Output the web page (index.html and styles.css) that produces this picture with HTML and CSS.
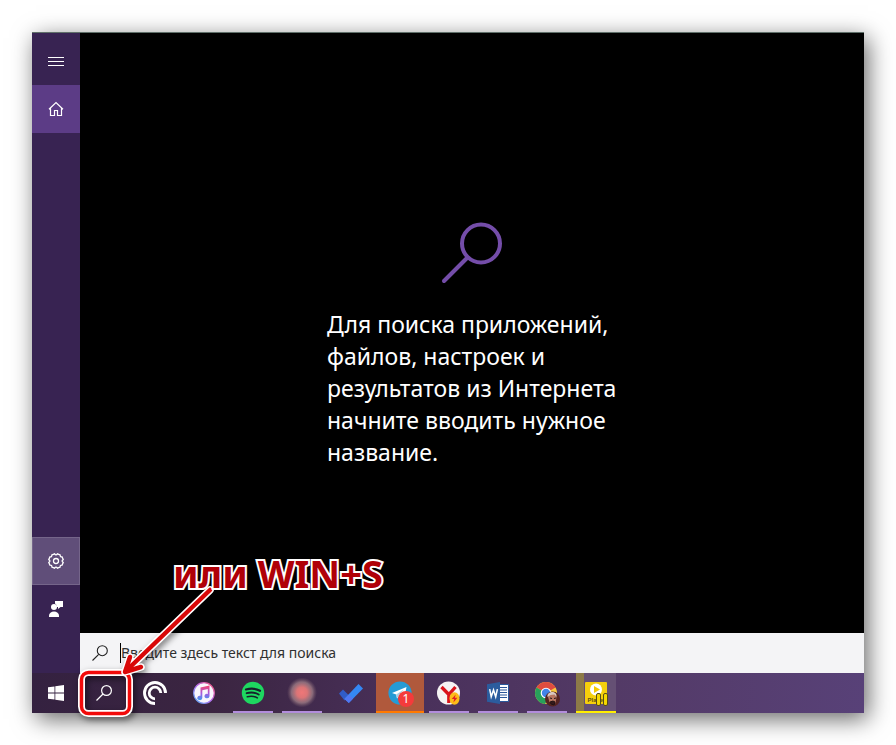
FILE: index.html
```html
<!DOCTYPE html>
<html lang="ru">
<head>
<meta charset="utf-8">
<meta name="viewport" content="width=device-width, initial-scale=1">
<title>Поиск</title>
<link rel="stylesheet" href="styles.css">
</head>
<body>
<main class="desktop">
  <div class="panel">
    <nav class="sidebar" aria-label="Меню">
      <button class="side-btn menu" aria-label="Меню">
        <svg width="16" height="16" viewBox="0 0 16 16"><path d="M0 4.5h16M0 8.5h16M0 12.5h16" stroke="#fff"/></svg>
      </button>
      <button class="side-btn home" aria-label="Главная">
        <svg width="16" height="16" viewBox="0 0 16 16" fill="none" stroke="#fff" stroke-width="1.2"><path d="M1 8.2 8 1.5l7 6.7M2.500 7v7.500h4V9.500h3v5h4V7"/></svg>
      </button>
      <button class="side-btn settings" aria-label="Параметры">
        <svg width="16" height="16" viewBox="-8 -8 16 16" fill="none" stroke="#fff" stroke-width="1.3"><path d="M7.200 1.400 6.100 4.100Q4 4 4.100 6.100L1.400 7.200Q0 5-1.400 7.200L-4.100 6.100Q-4 4-6.100 4.100L-7.200 1.400Q-5 0-7.200-1.400L-6.100-4.100Q-4-4-4.100-6.100L-1.400-7.200Q0-5 1.400-7.200L4.100-6.100Q4-4 6.100-4.100L7.200-1.400Q5 0 7.200 1.400Z"/><circle r="2.500"/></svg>
      </button>
      <button class="side-btn feedback" aria-label="Отзыв">
        <svg width="16" height="16" viewBox="0 0 16 16" fill="#fff"><path d="M7 0h8v6h-2.500L10 8V6H8.500A3 3 0 0 0 7 2.500z"/><circle cx="6" cy="6" r="3"/><path d="M1 16v-1.500a5 4 0 0 1 10 0V16z"/></svg>
      </button>
    </nav>
    <div class="content">
      <section class="hint">
        <svg class="hint-icon" width="62" height="62" viewBox="0 0 62 62" fill="none" stroke="#744da9" stroke-width="4" stroke-linecap="round"><circle cx="40" cy="21.500" r="19"/><path d="M26.500 35.500 3 59"/></svg>
        <p class="hint-text">Для поиска приложений, файлов, настроек и результатов из Интернета начните вводить нужное название.</p>
      </section>
      <label class="search">
        <svg width="16" height="16" viewBox="0 0 16 16" fill="none" stroke="#222" stroke-width="1.100"><circle cx="10.300" cy="5.700" r="5"/><path d="M6.700 9.300.5 15.500"/></svg>
        <input class="search-input" type="text" placeholder="Введите здесь текст для поиска" aria-label="Поиск">
      </label>
    </div>
  </div>
  <footer class="taskbar">
    <button class="task" aria-label="Пуск">
      <svg width="16" height="16" viewBox="0 0 16 16" fill="#fff"><path d="M0 2.300 6.500 1.400v6.100H0zM7.300 1.300 16 0v7.500H7.300zM0 8.400h6.500v6.200L0 13.700zM7.300 8.400H16V16l-8.700-1.300z"/></svg>
    </button>
    <button class="task" aria-label="Поиск">
      <svg width="16" height="16" viewBox="0 0 16 16" fill="none" stroke="#fff" stroke-width="1.200"><circle cx="10.500" cy="5.500" r="4.900"/><path d="M7 9 .5 15.500"/></svg>
    </button>
    <div class="apps">
      <button class="task" aria-label="Pocket Casts">
        <svg width="24" height="24" viewBox="0 0 24 24" fill="none" stroke="#fff"><path d="M12 22.500A10.500 10.500 0 1 1 22.500 12" stroke-width="2.900"/><path d="M12 17.800A5.800 5.800 0 1 1 17.800 12" stroke-width="2.800"/></svg>
      </button>
      <button class="task" aria-label="iTunes">
        <svg width="24" height="24" viewBox="0 0 24 24"><defs><linearGradient id="ring" x1="0" y1="1" x2="1" y2="0"><stop offset="0" stop-color="#53b4f5"/><stop offset=".5" stop-color="#b66df0"/><stop offset="1" stop-color="#f95472"/></linearGradient><linearGradient id="note" x1="0" y1="0" x2="0" y2="1"><stop offset="0" stop-color="#f5436f"/><stop offset=".55" stop-color="#a45be0"/><stop offset="1" stop-color="#3a9cf0"/></linearGradient></defs><circle cx="12" cy="12" r="10.300" fill="#f8f6fc" stroke="url(#ring)" stroke-width="1.200"/><path d="M8.500 6.500 17.500 4.500v10.700a2.500 2.200 0 1 1-1.700-2.200V8l-5.500 1.200v7.800A2.500 2.200 0 1 1 8.500 14.800z" fill="url(#note)"/></svg>
      </button>
      <button class="task open" aria-label="Spotify">
        <svg width="24" height="24" viewBox="0 0 24 24" fill="none" stroke="#17202b" stroke-linecap="round"><circle cx="12" cy="12" r="11.200" fill="#1ed760" stroke="none"/><path d="M5 8.500c4.500-1.300 10-1 14 1.300" stroke-width="2.200"/><path d="M5.700 12.200c4-1.100 8.500-.7 12 1.300" stroke-width="1.900"/><path d="M6.300 15.700c3.500-.9 7-.6 10 1.200" stroke-width="1.600"/></svg>
      </button>
      <button class="task open" aria-label="Запись">
        <svg width="32" height="32" viewBox="0 0 32 32"><defs><radialGradient id="glow"><stop offset="0" stop-color="#ef7778"/><stop offset=".35" stop-color="#dc7476"/><stop offset=".7" stop-color="#a9858c" stop-opacity=".7"/><stop offset="1" stop-color="#806370" stop-opacity="0"/></radialGradient></defs><circle cx="16" cy="15.500" r="15" fill="url(#glow)"/></svg>
      </button>
      <button class="task" aria-label="To Do">
        <svg width="24" height="24" viewBox="0 0 24 24"><path d="m0 12.500 4-4 6 6-4.500 5z" fill="#315cc7"/><path d="M5.500 17.800 19.500 3 24 7.400 9.800 22z" fill="#3488f5"/><path d="M5.500 18 10 13.500 14.200 17.500 9.800 22z" fill="#5177f2"/></svg>
      </button>
      <button class="task alert" aria-label="Telegram, 1 сообщение">
        <svg width="24" height="24" viewBox="0 0 24 24"><circle cx="12" cy="12" r="11.600" fill="#259bd5"/><path d="m4 12 14.500-6-2.500 13-5-3.500-2 2-.8-4z" fill="#fff"/><path d="m8.200 13.500 7.500-5-5.300 6.500-1.400 2.500z" fill="#a9cfe4"/></svg>
        <span class="badge">1</span>
      </button>
      <button class="task open" aria-label="Яндекс.Браузер">
        <svg width="24" height="24" viewBox="0 0 24 24"><circle cx="11.500" cy="12" r="11.500" fill="#f5f3f3"/><path d="m4.500 6 7.300 7.500L18.500 6M11.800 13v9" fill="none" stroke="#d9141c" stroke-width="3.300"/><ellipse cx="17.500" cy="17.500" rx="5" ry="6.200" fill="#fdbd18"/><path d="m18.700 13.500-4 4.600h2.500l-.8 3.400 4-4.700h-2.600z" fill="#e31e25"/></svg>
      </button>
      <button class="task open" aria-label="Word">
        <svg width="24" height="24" viewBox="0 0 24 24"><path d="M13 3.500h9.500v17H13z" fill="#fff" stroke="#2b579a"/><path d="M14 6.500h7M14 9h7m-7 2.500h7M14 14h7m-7 2.500h7" stroke="#2b579a"/><path d="M1 3.300 14 1v22L1 20.700z" fill="#2b5c9e"/><path d="m3.700 8.200 1.500 7.600L7.500 9l2.200 6.800 1.700-7.600" fill="none" stroke="#fff" stroke-width="1.500"/></svg>
      </button>
      <button class="task open" aria-label="Chrome">
        <svg width="28" height="28" viewBox="0 0 28 28"><circle cx="13" cy="14" r="11" fill="#f8ca3f"/><path d="M13 14 3.500 8.500A11 11 0 0 1 22.500 8.500z" fill="#df4c40"/><path d="M13 14 3.500 8.500A11 11 0 0 0 12 25l4.500-8z" fill="#28a05b"/><path d="M13 9h9.800l-.3-.5-1-1.500H7z" fill="#df4c40"/><circle cx="13" cy="14" r="5.300" fill="#fff"/><circle cx="13" cy="14" r="4.200" fill="#4184e8"/><circle cx="19.500" cy="20" r="7.500" fill="#542321"/><path d="M15 18c1-4 7.500-5 8.500 0l-1 6-3 2-3-3z" fill="#b97761"/><path d="M14.500 18c-1-6 10-7 9 0l-2-2.500-4 .5z" fill="#d9c9c0"/><path d="m17 19 2 .5m2 0 2-.5m-6 4 3-1 2 1-1 3-3-1z" stroke="#211315" fill="#35191a"/></svg>
      </button>
      <button class="task player" aria-label="Player">
        <svg width="26" height="26" viewBox="0 0 26 26"><rect x="2" y="2" width="22" height="22" rx="1" fill="#f5cf0c"/><circle cx="13" cy="9.500" r="6" fill="#fff"/><path d="m11 6 6 3.500-6 3.500z" fill="#f5c900"/><text x="4.500" y="22" class="player-name">Player</text><rect x="13.500" y="13.500" width="4" height="12" rx="1.500" fill="#f5d800" stroke="#554b1b"/><rect x="20.500" y="13.500" width="4" height="12" rx="1.500" fill="#f5d800" stroke="#554b1b"/></svg>
      </button>
    </div>
  </footer>
  <svg class="pointer" width="150" height="144" viewBox="0 0 150 144" fill="none" stroke-linejoin="round" stroke-linecap="round" aria-hidden="true">
    <rect x="9.500" y="92.500" width="48" height="41" rx="7" stroke="#fff" stroke-width="7"/>
    <rect x="9.500" y="92.500" width="48" height="41" rx="7" stroke="#f20a0a" stroke-width="3.500"/>
    <path d="M138 10 55 90M58 77l-5 15 16-5" stroke="#fff" stroke-width="7.500"/>
    <path d="M138 10 55 90M58 77l-5 15 16-5" stroke="#d90808" stroke-width="4.500"/>
  </svg>
  <p class="callout">или WIN+S</p>
</main>
</body>
</html>
```

FILE: styles.css
```css
* {
  box-sizing: border-box;
}

body {
  margin: 0;
  padding: 32px;
  background: #fff;
  font-family: "Noto Sans", "Open Sans", sans-serif;
}

button {
  margin: 0;
  padding: 0;
  border: 0;
  background: none;
  color: inherit;
  font: inherit;
}

svg {
  display: block;
  flex: none;
}

.desktop {
  position: relative;
  display: flex;
  flex-direction: column;
  min-height: calc(100vh - 64px);
  border-top: 1px solid #60706a;
  box-shadow: 4px 6px 22px rgba(0, 0, 0, 0.6);
}

.panel {
  display: flex;
  flex: 1;
  background: #000;
}

.sidebar {
  display: flex;
  flex-direction: column;
  width: 48px;
  padding: 4px 0 40px;
  background: #382352;
}

.side-btn {
  display: grid;
  place-items: center;
  height: 48px;
}

.home {
  background: #5c3c86;
}

.settings {
  margin-top: auto;
  border: 1px solid #75658a;
  background: #604e79;
}

.content {
  display: flex;
  flex: 1;
  flex-direction: column;
}

.hint {
  display: flex;
  flex: 1;
  flex-direction: column;
  align-items: center;
  justify-content: center;
  gap: 24px;
  padding-top: 24px;
}

.hint-text {
  width: 290px;
  margin: 0;
  color: #fff;
  font-size: 23px;
  line-height: 32px;
}

.search {
  display: flex;
  align-items: center;
  gap: 12px;
  height: 40px;
  padding: 0 12px;
  background: #f4f4f6;
}

.search-input {
  flex: 1;
  height: 20px;
  padding: 0;
  border: 0;
  border-left: 1px solid #000;
  outline: 0;
  background: none;
  color: #222;
  font: 14px/20px "Noto Sans", "Open Sans", sans-serif;
}

.search-input::placeholder {
  color: #303030;
  opacity: 1;
}

.taskbar {
  display: flex;
  height: 40px;
  background: linear-gradient(95deg, #342140, #3b2541 22%, #49305a 45%, #533a66 70%, #584178);
}

.apps {
  display: flex;
  gap: 1px;
  margin-left: 3px;
}

.task {
  position: relative;
  display: grid;
  place-items: center;
  width: 48px;
  height: 40px;
}

.open,
.player {
  width: 40px;
  margin: 0 4px;
  border-bottom: 2px solid #b28ddc;
  padding-top: 2px;
}

.alert {
  border-bottom: 2px solid #ff7a00;
  padding-top: 2px;
  background: #b0593c;
}

.player {
  border-color: #ffee00;
  background: linear-gradient(90deg, #8d7a48 8px, #655074 8px);
}

.player-name {
  fill: #5f5210;
  font-family: "Liberation Sans", sans-serif;
  font-size: 6px;
  font-weight: 700;
}

.badge {
  position: absolute;
  right: 10px;
  bottom: 4px;
  width: 16px;
  height: 16px;
  border-radius: 50%;
  background: #f43b3b;
  color: #fff;
  font-size: 12px;
  line-height: 16px;
  text-align: center;
}

.pointer {
  position: absolute;
  bottom: -11px;
  left: 40px;
  filter: drop-shadow(2px 3px 3px rgba(0, 0, 0, 0.5));
}

.callout {
  position: absolute;
  bottom: 112px;
  left: 141px;
  margin: 0;
  color: #b00008;
  font-size: 38px;
  font-weight: 700;
  line-height: 56px;
  white-space: nowrap;
  -webkit-text-stroke: 4px #fff;
  paint-order: stroke fill;
}
```
